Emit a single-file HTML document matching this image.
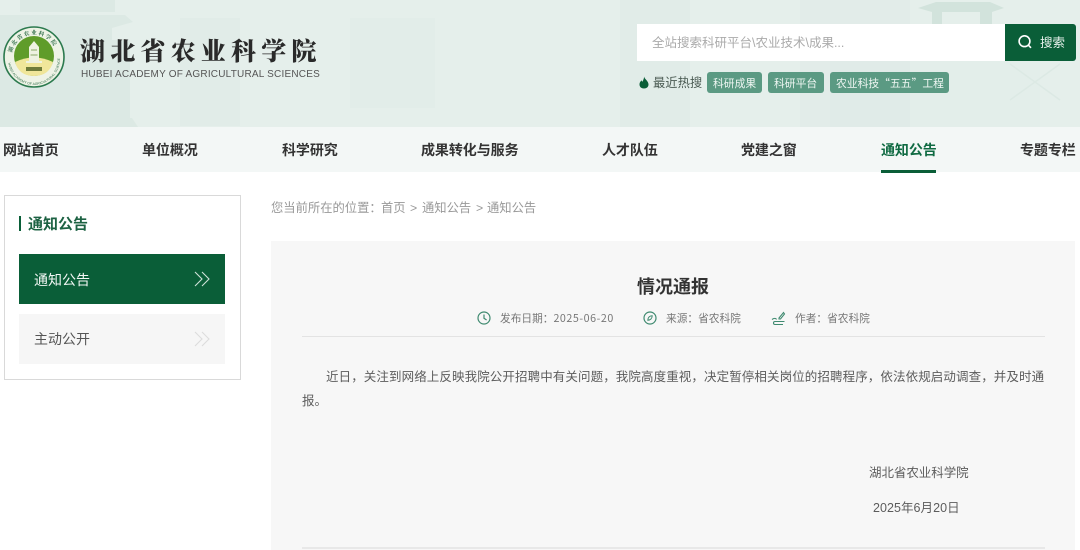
<!DOCTYPE html>
<html lang="zh-CN">
<head>
<meta charset="utf-8">
<title>情况通报</title>
<style>
*{margin:0;padding:0;box-sizing:border-box}
html,body{width:1080px;height:550px;overflow:hidden;background:#fff}
body{position:relative;font-family:"Liberation Sans","Noto Sans CJK SC",sans-serif;color:#333}
.a{position:absolute;white-space:nowrap}
.nav{top:140px;font-size:14px;letter-spacing:-.07px;line-height:20px;font-weight:700;color:#333}
.tag{top:72px;height:21px;background:#5b9a83;border-radius:3px}
.tt{top:75px;font-family:"Noto Sans CJK SC",sans-serif;color:#eef6f2;font-size:10.8px;line-height:16px}
.meta{top:312px;font-family:"Noto Sans CJK SC",sans-serif;font-size:10.7px;line-height:14px;color:#777}
.bc{top:199px;font-size:12.3px;line-height:18px;color:#999}
.txt{font-size:12.5px;line-height:18px;color:#5c5c5c}
</style>
</head>
<body>
<!-- header background -->
<div class="a" style="left:0;top:0;width:1080px;height:127px;background:#e5efeb"></div>
<svg class="a" style="left:0;top:0" width="1080" height="127" viewBox="0 0 1080 127">
  <g fill="#dce9e4">
    <rect x="20" y="0" width="95" height="12"/>
    <path d="M0 15 L125 15 L133 22 L112 28 L112 40 L130 40 L130 118 L0 118Z"/>
    <path d="M0 118 L132 118 L138 127 L0 127Z"/>
    <rect x="180" y="18" width="60" height="108" opacity=".4"/>
    <rect x="350" y="18" width="85" height="90" opacity=".25"/>
    <rect x="620" y="0" width="70" height="127" opacity=".45"/>
    <rect x="800" y="0" width="110" height="127" opacity=".35"/>
    <rect x="830" y="60" width="210" height="67" opacity=".2"/>
  </g>
  <path d="M918 8 L936 2 H990 L1004 8 L992 12 V24 H980 V12 H942 V24 H932 V12Z" fill="#d2e3dc"/>
  <path d="M1010 64 L1060 100 M1060 64 L1010 100" stroke="#dce9e4" stroke-width="1.5"/>
</svg>

<!-- logo -->
<svg class="a" style="left:3px;top:26px" width="62" height="62" viewBox="0 0 62 62">
  <circle cx="31" cy="31" r="30" fill="#eef3e6" stroke="#2c7a4e" stroke-width="1.6"/>
  <circle cx="31" cy="30" r="20" fill="#5f9c2a"/>
  <path d="M12 36 Q31 27 50 36 Q46 50 31 50 Q16 50 12 36Z" fill="#f0e69a"/>
  <path d="M26 36 V21 L31 15 L36 21 V36Z" fill="#eef2e2"/>
  <path d="M28 24H34M27.500 29H34.500" stroke="#8aa868" stroke-width="1"/>
  <rect x="23" y="35" width="16" height="2" fill="#eef2e2"/>
  <rect x="23" y="41" width="16" height="4" fill="#6f7b3a"/>
  <defs>
    <path id="t1" d="M8.500 31A22.500 22.500 0 0 1 53.500 31"/>
    <path id="t2" d="M5 33A26 26 0 0 0 57 33"/>
  </defs>
  <text font-family="'Noto Serif CJK SC',serif" font-size="5.600" font-weight="700" fill="#2b6a45" letter-spacing="1.400"><textPath href="#t1" startOffset="6%">湖北省农业科学院</textPath></text>
  <text font-family="'Liberation Sans',sans-serif" font-size="3.300" fill="#2b6a45" letter-spacing=".1"><textPath href="#t2" startOffset="5%">HUBEI ACADEMY OF AGRICULTURAL SCIENCES</textPath></text>
</svg>

<div class="a" style="left:80px;top:34px;font-family:'Noto Serif CJK SC',serif;font-weight:900;font-size:25px;line-height:32px;letter-spacing:5.200px;color:#2a2a2a">湖北省农业科学院</div>
<div class="a" style="left:81px;top:68px;font-size:10px;line-height:13px;color:#555;letter-spacing:.21px">HUBEI ACADEMY OF AGRICULTURAL SCIENCES</div>

<!-- search -->
<div class="a" style="left:637px;top:24px;width:368px;height:37px;background:#fff"></div>
<div class="a" style="left:652px;top:35px;font-size:12.500px;line-height:17px;color:#aaa">全站搜索科研平台\农业技术\成果...</div>
<div class="a" style="left:1005px;top:24px;width:71px;height:37px;background:#0a5e38;border-radius:0 3px 3px 0"></div>
<svg class="a" style="left:1017px;top:34px" width="16" height="16" viewBox="0 0 16 16"><circle cx="7.500" cy="7.200" r="5.400" fill="none" stroke="#fff" stroke-width="1.600"/><path d="M11.400 11.200L14 13.800" stroke="#fff" stroke-width="1.600"/></svg>
<div class="a" style="left:1040px;top:35px;font-size:12.500px;line-height:17px;color:#e8f2ed">搜索</div>

<!-- hot -->
<svg class="a" style="left:638px;top:76px" width="12" height="13" viewBox="0 0 12 13"><path d="M6 0.500C6.500 3 10.500 5 10.500 8.500C10.500 11 8.500 12.500 6 12.500C3.500 12.500 1.500 11 1.500 8.500C1.500 6.500 2.700 5.500 3.400 4.300C3.800 5 4 5.500 4.400 5.800C5 4.500 6.200 2.500 6 0.500Z" fill="#0a5e38"/></svg>
<div class="a" style="left:653px;top:75px;font-size:12.300px;line-height:17px;color:#4a5a52">最近热搜</div>
<div class="a tag" style="left:707px;width:55px"></div>
<div class="a tt" style="left:713px">科研成果</div>
<div class="a tag" style="left:768px;width:56px"></div>
<div class="a tt" style="left:774px">科研平台</div>
<div class="a tag" style="left:830px;width:119px"></div>
<div class="a tt" style="left:836px">农业科技“五五”工程</div>

<!-- nav -->
<div class="a" style="left:0;top:127px;width:1080px;height:45px;background:#f3f7f6"></div>
<div class="a nav" style="left:3px">网站首页</div>
<div class="a nav" style="left:142px">单位概况</div>
<div class="a nav" style="left:282px">科学研究</div>
<div class="a nav" style="left:421px">成果转化与服务</div>
<div class="a nav" style="left:602px">人才队伍</div>
<div class="a nav" style="left:741px">党建之窗</div>
<div class="a nav" style="left:881px;color:#0f6a42">通知公告</div>
<div class="a nav" style="left:1020px">专题专栏</div>
<div class="a" style="left:881px;top:170px;width:55px;height:2.500px;background:#0a5e38"></div>

<!-- sidebar -->
<div class="a" style="left:4px;top:195px;width:237px;height:185px;border:1px solid #d9d9d9;background:#fff"></div>
<div class="a" style="left:19px;top:216px;width:2px;height:15px;background:#0a5e38"></div>
<div class="a" style="left:28px;top:215px;font-size:15px;line-height:20px;font-weight:700;color:#1d6243">通知公告</div>
<div class="a" style="left:19px;top:254px;width:206px;height:50px;background:#0a5e38"></div>
<div class="a" style="left:34px;top:270px;font-size:14px;line-height:20px;color:#f2f7f4">通知公告</div>
<svg class="a" style="left:193px;top:271px" width="18" height="16" viewBox="0 0 18 16"><path d="M2 1L9 8L2 15M9 1L16 8L9 15" fill="none" stroke="#cfe2d8" stroke-width="1.100"/></svg>
<div class="a" style="left:19px;top:314px;width:206px;height:50px;background:#f6f6f6"></div>
<div class="a" style="left:34px;top:329px;font-size:14px;line-height:20px;color:#555">主动公开</div>
<svg class="a" style="left:193px;top:331px" width="18" height="16" viewBox="0 0 18 16"><path d="M2 1L9 8L2 15M9 1L16 8L9 15" fill="none" stroke="#dcdcdc" stroke-width="1.100"/></svg>

<!-- breadcrumb -->
<div class="a bc" style="left:271px">您当前所在的位置：</div>
<div class="a bc" style="left:381px">首页</div>
<div class="a bc" style="left:410px">&gt;</div>
<div class="a bc" style="left:422px">通知公告</div>
<div class="a bc" style="left:476px">&gt;</div>
<div class="a bc" style="left:487px">通知公告</div>

<!-- article -->
<div class="a" style="left:271px;top:241px;width:804px;height:309px;background:#f7f7f7"></div>
<div class="a" style="left:637px;top:275px;font-size:18px;line-height:25px;font-weight:700;color:#333">情况通报</div>

<svg class="a" style="left:477px;top:311px" width="14" height="14" viewBox="0 0 14 14"><circle cx="7" cy="7" r="6" fill="none" stroke="#3f8a70" stroke-width="1.200"/><path d="M7 3.500V7.300L9.600 9" fill="none" stroke="#3f8a70" stroke-width="1.200"/></svg>
<div class="a meta" style="left:500px">发布日期：<span style="letter-spacing:.55px">2025-06-20</span></div>
<svg class="a" style="left:643px;top:311px" width="14" height="14" viewBox="0 0 14 14"><circle cx="7" cy="7" r="6" fill="none" stroke="#3f8a70" stroke-width="1.200"/><path d="M4.800 9.200C4.800 6.600 6.600 4.800 9.200 4.800C9.200 7.400 7.400 9.200 4.800 9.200Z" fill="none" stroke="#3f8a70" stroke-width="1"/></svg>
<div class="a meta" style="left:666px">来源：省农科院</div>
<svg class="a" style="left:771px;top:310px" width="15" height="16" viewBox="0 0 15 16"><path d="M8 8L12.500 2.500L13.500 4L9.500 9H8Z" fill="none" stroke="#3f8a70" stroke-width="1.100"/><path d="M1 9.500C3 8 5 8 5.500 9.500M13.500 11.500H4C2 11.500 2 14.500 4 14.500H12" fill="none" stroke="#3f8a70" stroke-width="1.100"/></svg>
<div class="a meta" style="left:795px">作者：省农科院</div>
<div class="a" style="left:302px;top:336px;width:743px;height:1px;background:#e3e3e3"></div>

<div class="a txt" style="left:326px;top:368px;letter-spacing:.1px">近日，关注到网络上反映我院公开招聘中有关问题，我院高度重视，决定暂停相关岗位的招聘程序，依法依规启动调查，并及时通</div>
<div class="a txt" style="left:302px;top:392px">报。</div>
<div class="a txt" style="left:869px;top:464px;letter-spacing:-.05px">湖北省农业科学院</div>
<div class="a txt" style="left:873px;top:499px;letter-spacing:.05px">2025年6月20日</div>
<div class="a" style="left:302px;top:547px;width:743px;height:2px;background:#e8e8e8"></div>
</body>
</html>
